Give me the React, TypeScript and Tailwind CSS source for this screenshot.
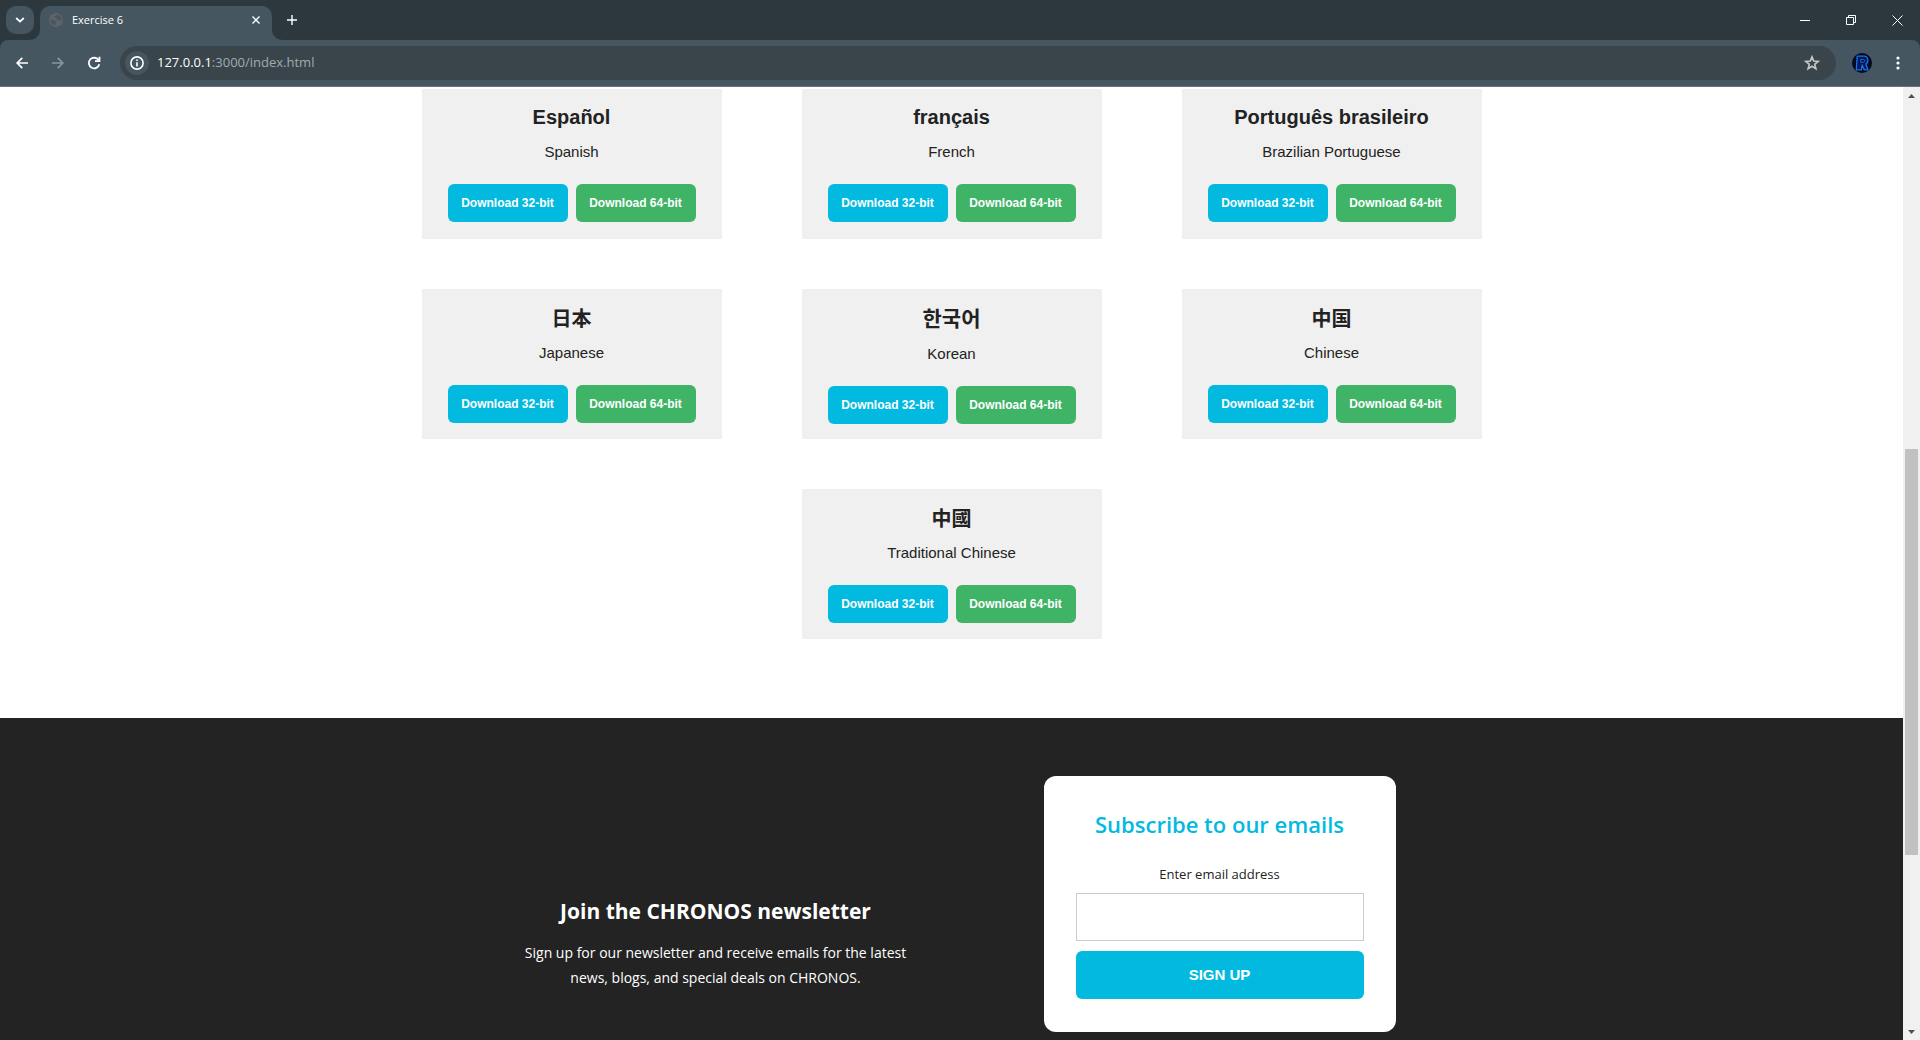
import type { ReactNode } from "react";

type Language = {
  native: string;
  english: string;
  lang: string;
  heading: string;
};

const latin = "mb-[13px] text-xl font-bold leading-6";
const japanese = "mb-[10px] text-xl font-bold leading-7 font-['Liberation_Sans','Noto_Sans_CJK_JP',sans-serif]";
const korean = "mb-[11px] text-[21px] font-bold leading-7 font-['Liberation_Sans','Noto_Sans_CJK_KR',sans-serif]";
const simplified = "mb-[10px] text-xl font-bold leading-7 font-['Liberation_Sans','Noto_Sans_CJK_SC',sans-serif]";
const traditional = "mb-[10px] text-xl font-bold leading-7 font-['Liberation_Sans','Noto_Sans_CJK_TC',sans-serif]";

const languages: Language[] = [
  { native: "Español", english: "Spanish", lang: "es", heading: latin },
  { native: "français", english: "French", lang: "fr", heading: latin },
  { native: "Português brasileiro", english: "Brazilian Portuguese", lang: "pt-BR", heading: latin },
  { native: "日本", english: "Japanese", lang: "ja", heading: japanese },
  { native: "한국어", english: "Korean", lang: "ko", heading: korean },
  { native: "中国", english: "Chinese", lang: "zh-CN", heading: simplified },
  { native: "中國", english: "Traditional Chinese", lang: "zh-TW", heading: traditional },
];

function IconButton({ label, className, children }: { label: string; className: string; children: ReactNode }) {
  return (
    <button type="button" aria-label={label} className={`flex shrink-0 items-center justify-center ${className}`}>
      {children}
    </button>
  );
}

function TitleBar() {
  return (
    <div className="flex h-10 shrink-0 items-stretch bg-[#2d383e]">
      <div className="flex items-start pt-[6px] pl-[6px]">
        <IconButton label="Search tabs" className="size-7 rounded-[10px] bg-[#455660] text-white">
          <svg width="10" height="6" viewBox="0 0 10 6" fill="none" stroke="currentColor" strokeWidth="1.8">
            <path d="M1.2 1 5 4.6 8.8 1" />
          </svg>
        </IconButton>
      </div>
      <div className="relative mt-[6px] ml-[6px] flex w-58 items-center rounded-t-[10px] bg-[#455660] pr-2 pl-[9px] text-white">
        <svg className="absolute bottom-0 -left-[10px] text-[#455660]" width="10" height="10" viewBox="0 0 10 10" fill="currentColor">
          <path d="M10 0v10H0A10 10 0 0 0 10 0Z" />
        </svg>
        <svg className="absolute -right-[10px] bottom-0 text-[#455660]" width="10" height="10" viewBox="0 0 10 10" fill="currentColor">
          <path d="M0 0v10h10A10 10 0 0 1 0 0Z" />
        </svg>
        <svg className="-mt-[6px] text-[#5f6368]" width="14" height="14" viewBox="0 0 14 14">
          <circle cx="7" cy="7" r="7" fill="currentColor" />
          <path
            d="M8.3 1.6C7.6 3 6.5 2.6 5.8 3.6c-.5.9.3 1.5 1.2 1.6 1.1.1 1.4.6 1.5 1.5.2.9 1.5.7 2.4.6l1.6-.1A5.5 5.5 0 0 0 8.3 1.6ZM1.5 6.6c1.4-.3 3.2 0 4 .5.9.6.4 1.5 1.3 2 .9.4.5 1.7-.3 1.9-.6.2-.6.8-.6 1.3A5.5 5.5 0 0 1 1.5 6.6Z"
            fill="#455660"
          />
        </svg>
        <span className="-mt-[6px] ml-[9px] flex-1 font-['Open_Sans','Noto_Sans',sans-serif] text-[11px]">Exercise 6</span>
        <IconButton label="Close tab" className="-mt-[6px] size-4">
          <svg width="8" height="8" viewBox="0 0 8 8" stroke="currentColor" strokeWidth="1.4">
            <path d="m.5.5 7 7m0-7-7 7" />
          </svg>
        </IconButton>
      </div>
      <IconButton label="New tab" className="ml-[10px] w-5 text-white">
        <svg width="10" height="10" viewBox="0 0 10 10" stroke="currentColor" strokeWidth="1.4">
          <path d="M5 0v10M0 5h10" />
        </svg>
      </IconButton>
      <div className="ml-auto flex text-white">
        <IconButton label="Minimize" className="w-[46px]">
          <svg width="10" height="10" viewBox="0 0 10 10" stroke="currentColor">
            <path d="M0 5.5h10" />
          </svg>
        </IconButton>
        <IconButton label="Restore" className="w-[46px]">
          <svg width="10" height="10" viewBox="0 0 10 10" fill="none" stroke="currentColor">
            <path d="M.5 2.5h7v7h-7zM2.5 2.5v-2h7v7h-2" />
          </svg>
        </IconButton>
        <IconButton label="Close window" className="w-[46px]">
          <svg width="11" height="11" viewBox="0 0 11 11" stroke="currentColor">
            <path d="m.5.5 10 10m0-10-10 10" />
          </svg>
        </IconButton>
      </div>
    </div>
  );
}

function Toolbar() {
  return (
    <div className="bg-[#2d383e]">
      <div className="flex h-[47px] shrink-0 items-center rounded-t-lg border-b border-[#66757d] bg-[#455660] text-white">
        <IconButton label="Back" className="ml-2 size-7">
          <svg width="12" height="12" viewBox="0 0 12 12" fill="none" stroke="currentColor" strokeWidth="1.7">
            <path d="M6.3.8 1.2 6l5.1 5.2M1.2 6H12" />
          </svg>
        </IconButton>
        <IconButton label="Forward" className="ml-2 size-7 text-[#8b969c]">
          <svg width="12" height="12" viewBox="0 0 12 12" fill="none" stroke="currentColor" strokeWidth="1.7">
            <path d="m5.7.8 5.1 5.2-5.1 5.2M10.8 6H0" />
          </svg>
        </IconButton>
        <IconButton label="Reload" className="ml-2 size-7">
          <svg width="14" height="14" viewBox="0 0 14 14" fill="none" stroke="currentColor" strokeWidth="1.8">
            <path d="M11.6 4.2A5.3 5.3 0 1 0 12.3 8.2M12.5.7v4.4H8" />
          </svg>
        </IconButton>
        <div className="ml-3 flex h-[34px] flex-1 items-center rounded-full bg-[#39444b] pr-3 pl-[5px]">
          <IconButton label="View site information" className="size-6 rounded-full bg-[#455660]">
            <svg width="14" height="14" viewBox="0 0 14 14" fill="none" stroke="currentColor" strokeWidth="1.6">
              <circle cx="7" cy="7" r="6.1" />
              <path d="M7 6.2v4.2M7 3.5v1.6" />
            </svg>
          </IconButton>
          <div className="ml-2 flex-1 font-['Open_Sans','Noto_Sans',sans-serif] text-[13px] text-[#a3abaf]">
            <span className="text-white">127.0.0.1</span>:3000/index.html
          </div>
          <IconButton label="Bookmark this tab" className="size-6 text-[#c7c7c7]">
            <svg width="16" height="16" viewBox="0 0 16 16" fill="none" stroke="currentColor" strokeWidth="1.6">
              <path d="m8 1.9 1.7 4.2 4.5.3-3.5 2.9 1.2 4.4L8 11.3l-3.9 2.4 1.2-4.4-3.5-2.900 4.500-.3Z" />
            </svg>
          </IconButton>
        </div>
        <IconButton label="Profile" className="ml-4 size-5">
          <svg width="20" height="20" viewBox="0 0 20 20">
            <circle cx="10" cy="10" r="10" fill="#040822" />
            <path
              d="M5.2 3.2h6.800c4.600 0 4.900 6.200 1.900 7.800l2 5.800h-3.700l-2-4.800-.8 4.800H4.300Z"
              fill="#08175c"
              stroke="#1277e6"
              strokeWidth="1.300"
              strokeLinejoin="round"
            />
            <path d="M8.800 6.600h2.700c1.700 0 1.500 2.600-.2 2.600H8.600Z" fill="#040822" stroke="#1277e6" />
          </svg>
        </IconButton>
        <IconButton label="Menu" className="mr-[11px] ml-[15px] h-7 w-[22px]">
          <svg width="4" height="14" viewBox="0 0 4 14" fill="currentColor">
            <circle cx="2" cy="2" r="1.6" />
            <circle cx="2" cy="7" r="1.6" />
            <circle cx="2" cy="12" r="1.6" />
          </svg>
        </IconButton>
      </div>
    </div>
  );
}

function LanguageCard({ native, english, lang, heading }: Language) {
  const button = "h-[38px] w-30 rounded-md text-xs font-bold text-white";
  return (
    <article className="h-[150px] w-[300px] bg-[#f0f0f0] pt-4 text-center text-[#222]">
      <h2 lang={lang} className={heading}>
        {native}
      </h2>
      <p className="text-[15px] leading-[19px]">{english}</p>
      <div className="mt-[23px] flex justify-center gap-2">
        <button type="button" className={`${button} bg-[#02b9df]`}>
          Download 32-bit
        </button>
        <button type="button" className={`${button} bg-[#3fb366]`}>
          Download 64-bit
        </button>
      </div>
    </article>
  );
}

function Newsletter() {
  return (
    <footer className="flex flex-1 items-start justify-center gap-30 bg-[#232323] pt-[58px] font-['Open_Sans','Noto_Sans',sans-serif]">
      <section className="w-[416px] pt-[119px] text-center text-white">
        <h2 className="text-[21px] leading-8 font-bold">Join the CHRONOS newsletter</h2>
        <p className="mx-auto mt-[13px] w-[400px] text-sm leading-[25px]">
          Sign up for our newsletter and receive emails for the latest news, blogs, and special deals on CHRONOS.
        </p>
      </section>
      <form className="flex w-[352px] flex-col rounded-xl bg-white px-8 pt-8 pb-[33px] text-center">
        <h2 className="text-[22px] leading-8 font-semibold text-[#02b9df]">Subscribe to our emails</h2>
        <label htmlFor="email" className="mt-6 text-[13px] leading-5 text-[#222]">
          Enter email address
        </label>
        <input id="email" type="email" className="mt-[9px] h-12 border border-[#ccc] bg-white px-3" />
        <button
          type="submit"
          className="mt-[10px] h-12 rounded-md bg-[#02b9df] font-['Liberation_Sans',sans-serif] text-[15px] font-bold text-white"
        >
          SIGN UP
        </button>
      </form>
    </footer>
  );
}

function Scrollbar() {
  return (
    <div aria-hidden="true" className="flex w-[17px] shrink-0 flex-col items-center bg-[#f0f0f0] text-[#505050]">
      <div className="flex h-[17px] items-center">
        <svg width="7" height="4" viewBox="0 0 7 4" fill="currentColor">
          <path d="M0 4h7L3.5 0Z" />
        </svg>
      </div>
      <div className="flex w-[13px] flex-1 flex-col">
        <div className="flex-[345]" />
        <div className="flex-[406] bg-[#c1c1c1]" />
        <div className="flex-[168]" />
      </div>
      <div className="flex h-[17px] items-center">
        <svg width="7" height="4" viewBox="0 0 7 4" fill="currentColor">
          <path d="M0 0h7L3.5 4Z" />
        </svg>
      </div>
    </div>
  );
}

export default function App() {
  return (
    <div className="flex h-screen flex-col overflow-hidden bg-white">
      <TitleBar />
      <Toolbar />
      <div className="flex min-h-0 flex-1">
        <div className="flex min-w-0 flex-1 flex-col overflow-hidden font-['Liberation_Sans',sans-serif]">
          <main className="mx-auto flex w-full max-w-[1060px] flex-wrap justify-center gap-x-20 gap-y-[50px] pt-[2px] pb-[79px]">
            {languages.map((language) => (
              <LanguageCard key={language.lang} {...language} />
            ))}
          </main>
          <Newsletter />
        </div>
        <Scrollbar />
      </div>
    </div>
  );
}
